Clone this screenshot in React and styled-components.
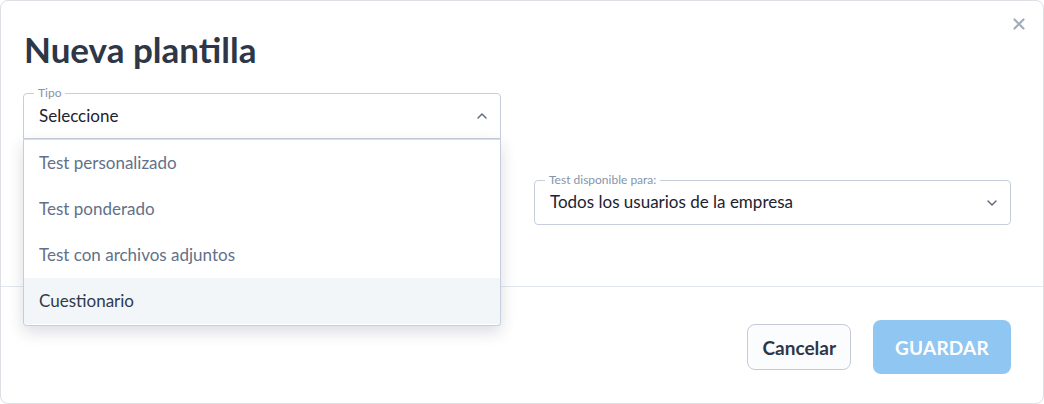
import React from "react";
import styled, { createGlobalStyle } from "styled-components";

const Global = createGlobalStyle`
  html, body { margin: 0; padding: 0; background: #fff; }
  body { font-family: Lato, "Noto Sans", sans-serif; }
  * { box-sizing: border-box; }
`;

const Modal = styled.div`
  position: relative;
  width: 1044px;
  height: 404px;
  border: 1px solid #dcdfe4;
  border-radius: 8px;
  background: #fff;
  display: flex;
  flex-direction: column;
  overflow: hidden;
`;

const Close = styled.button`
  position: absolute;
  top: 15px;
  right: 16px;
  width: 16px;
  height: 16px;
  padding: 0;
  border: none;
  background: none;
  display: flex;
  align-items: center;
  justify-content: center;
  cursor: pointer;
`;

const Body = styled.div`
  padding: 28px 33px 0 22px;
  height: 285px;
`;

const Title = styled.h1`
  margin: 0 0 0 1px;
  font-size: 35px;
  line-height: 40px;
  font-weight: 700;
  color: #2d3748;
`;

const Grid = styled.div`
  margin-top: 24px;
  display: grid;
  grid-template-columns: 478px 477px;
  grid-template-rows: 46px 46px;
  column-gap: 33px;
  row-gap: 41px;
`;

const Field = styled.div`
  position: relative;
`;

const SelectBox = styled.div`
  position: relative;
  height: ${(p) => (p.$open ? 46 : 45)}px;
  border: 1px solid #c5cfdb;
  border-radius: ${(p) => (p.$open ? "4px 4px 0 0" : "4px")};
  display: flex;
  align-items: center;
  justify-content: space-between;
  padding: 0 12px 2px 15px;
  font-size: 17px;
  color: #1c2230;
  & > svg { margin-top: 2px; }
`;

const Legend = styled.span`
  position: absolute;
  top: -8px;
  left: 10px;
  padding: 0 4px;
  background: #fff;
  font-size: 12px;
  line-height: 14px;
  color: #8594ab;
`;

const Menu = styled.ul`
  position: absolute;
  top: 46px;
  left: 0;
  right: 0;
  margin: 0;
  padding: 0 0 1px;
  list-style: none;
  background: #fff;
  border: 1px solid #c5cfdb;
  border-top-color: #d5dde6;
  border-radius: 0 0 4px 4px;
  box-shadow: 0 6px 16px rgba(30, 40, 60, 0.16);
  z-index: 2;
  overflow: hidden;
`;

const Option = styled.li`
  height: 46px;
  display: flex;
  align-items: center;
  padding: 0 15px 2px;
  font-size: 17px;
  color: ${(p) => (p.$active ? "#2f3a4b" : "#627189")};
  background: ${(p) => (p.$active ? "#f3f6f9" : "#fff")};
`;

const Footer = styled.div`
  flex: 1;
  border-top: 1px solid #e2e7ee;
  display: flex;
  align-items: center;
  justify-content: flex-end;
  gap: 22px;
  padding: 4px 32px 0 0;
`;

const CancelButton = styled.button`
  height: 46px;
  padding: 0 14px;
  border: 1px solid #c3cbd7;
  border-radius: 8px;
  background: #fbfcfd;
  font-family: inherit;
  font-size: 19px;
  font-weight: 700;
  color: #2d3748;
`;

const SaveButton = styled.button`
  height: 54px;
  width: 138px;
  border: none;
  border-radius: 8px;
  background: #90c6f2;
  font-family: inherit;
  font-size: 19px;
  font-weight: 700;
  color: #fff;
  letter-spacing: 0.2px;
`;

const Chevron = ({ up }) => (
  <svg width="12" height="8" viewBox="0 0 12 8" fill="none">
    <path
      d={up ? "M2 6 L6 2 L10 6" : "M2 2 L6 6 L10 2"}
      stroke="#5a6678"
      strokeWidth="1.4"
      strokeLinecap="round"
      strokeLinejoin="round"
    />
  </svg>
);

const options = [
  "Test personalizado",
  "Test ponderado",
  "Test con archivos adjuntos",
  "Cuestionario",
];

export default function App() {
  return (
    <>
      <Global />
      <Modal>
        <Close aria-label="Cerrar">
          <svg width="12" height="12" viewBox="0 0 12 12">
            <path
              d="M1.5 1.5 L10.5 10.5 M10.5 1.5 L1.5 10.5"
              stroke="#a3acb9"
              strokeWidth="2.2"
              strokeLinecap="round"
            />
          </svg>
        </Close>
        <Body>
          <Title>Nueva plantilla</Title>
          <Grid>
            <Field>
              <SelectBox $open>
                <Legend>Tipo</Legend>
                <span>Seleccione</span>
                <Chevron up />
              </SelectBox>
              <Menu>
                {options.map((o, i) => (
                  <Option key={o} $active={i === 3}>
                    {o}
                  </Option>
                ))}
              </Menu>
            </Field>
            <div />
            <div />
            <Field>
              <SelectBox>
                <Legend>Test disponible para:</Legend>
                <span>Todos los usuarios de la empresa</span>
                <Chevron />
              </SelectBox>
            </Field>
          </Grid>
        </Body>
        <Footer>
          <CancelButton>Cancelar</CancelButton>
          <SaveButton>GUARDAR</SaveButton>
        </Footer>
      </Modal>
    </>
  );
}
